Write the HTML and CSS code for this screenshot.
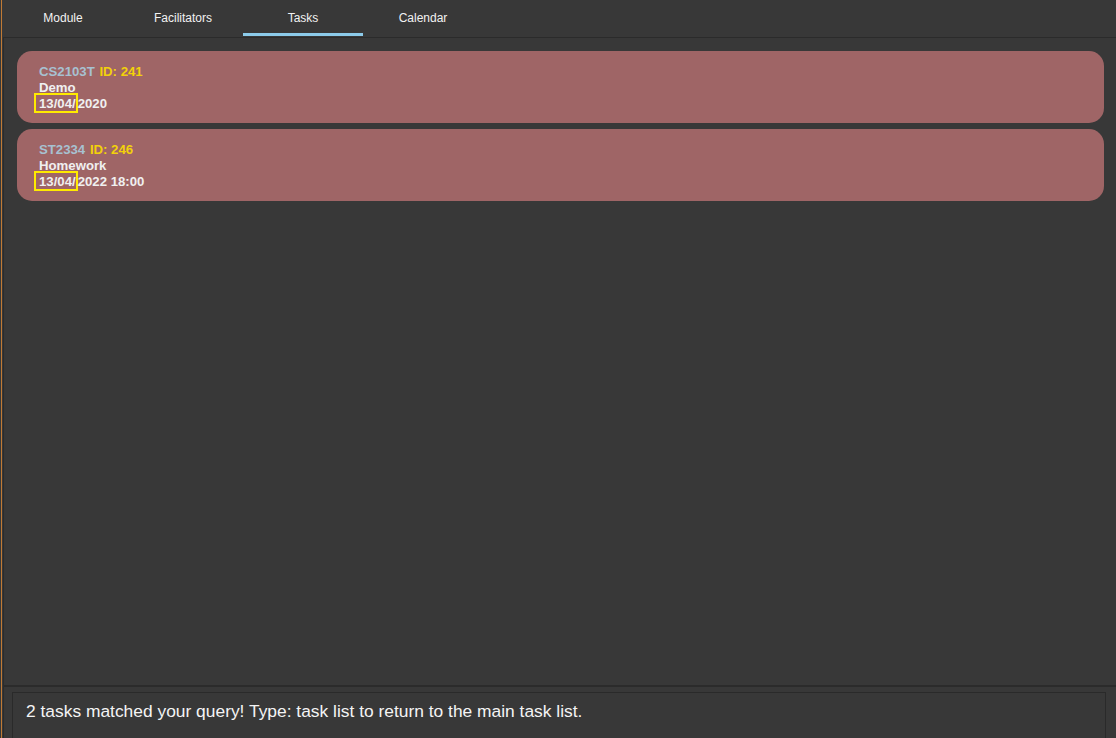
FILE: index.html
```html
<!DOCTYPE html>
<html>
<head>
<meta charset="utf-8">
<link rel="stylesheet" href="styles.css">
</head>
<body>
<div class="app">
  <div class="tabbar">
    <div class="tab">Module</div>
    <div class="tab">Facilitators</div>
    <div class="tab active">Tasks</div>
    <div class="tab">Calendar</div>
  </div>
  <div class="content">
    <div class="card">
      <div class="line"><span class="code">CS2103T</span> <span class="id">ID: 241</span></div>
      <div class="line">Demo</div>
      <div class="line"><span class="hl">13/04/</span>2020</div>
    </div>
    <div class="card">
      <div class="line"><span class="code">ST2334</span> <span class="id">ID: 246</span></div>
      <div class="line">Homework</div>
      <div class="line"><span class="hl">13/04/</span>2022 18:00</div>
    </div>
  </div>
  <div class="result">
    <div class="resultbox">2 tasks matched your query! Type: task list to return to the main task list.</div>
  </div>
</div>
</body>
</html>
```
FILE: styles.css
```css
html, body {
  margin: 0;
  padding: 0;
  background: #383838;
  height: 738px;
  overflow: hidden;
  font-family: "Liberation Sans", Arial, sans-serif;
}
body {
  padding-left: 1px;
  box-sizing: border-box;
}
.app {
  height: 738px;
  display: flex;
  flex-direction: column;
  border-left: 1px solid #c07a35;
  box-sizing: border-box;
}
.tabbar {
  height: 37px;
  display: flex;
  padding-left: 1px;
  box-sizing: border-box;
  background: #383838;
}
.tab {
  width: 120px;
  height: 36px;
  box-sizing: border-box;
  color: #f2f2f2;
  font-size: 12px;
  text-align: center;
  line-height: 36px;
  border-bottom: 3px solid transparent;
}
.tab.active {
  border-bottom-color: #8ccbea;
}
.content {
  flex: 1;
  margin-left: 1px;
  border-left: 1px solid #2b2b2b;
  border-top: 1px solid #2b2b2b;
  padding: 13px 12px 0 13px;
  display: flex;
  flex-direction: column;
  gap: 6px;
}
.card {
  height: 72px;
  box-sizing: border-box;
  background: #9f6566;
  border-radius: 15px;
  padding: 13px 22px 0 22px;
}
.line {
  height: 16px;
  line-height: 16px;
  font-size: 13.2px;
  font-weight: bold;
  color: #f0f0f0;
  white-space: nowrap;
}
.code {
  color: #a7c1d1;
  margin-right: 1px;
}
.id {
  color: #f2d10a;
}
.hl {
  border: 2px solid #ffea00;
  margin-left: -5px;
  padding-left: 3px;
  padding-right: 0;
  padding-top: 1px;
}
.result {
  height: 53px;
  box-sizing: border-box;
  margin-left: 1px;
  border-left: 1px solid #2b2b2b;
  border-top: 2px solid #2b2b2b;
  padding: 5px 10px 0 8px;
}
.resultbox {
  height: 60px;
  border: 1px solid #2a2a2a;
  box-sizing: border-box;
  color: #f4f4f4;
  font-size: 17.4px;
  padding: 8px 0 0 13px;
}
```
